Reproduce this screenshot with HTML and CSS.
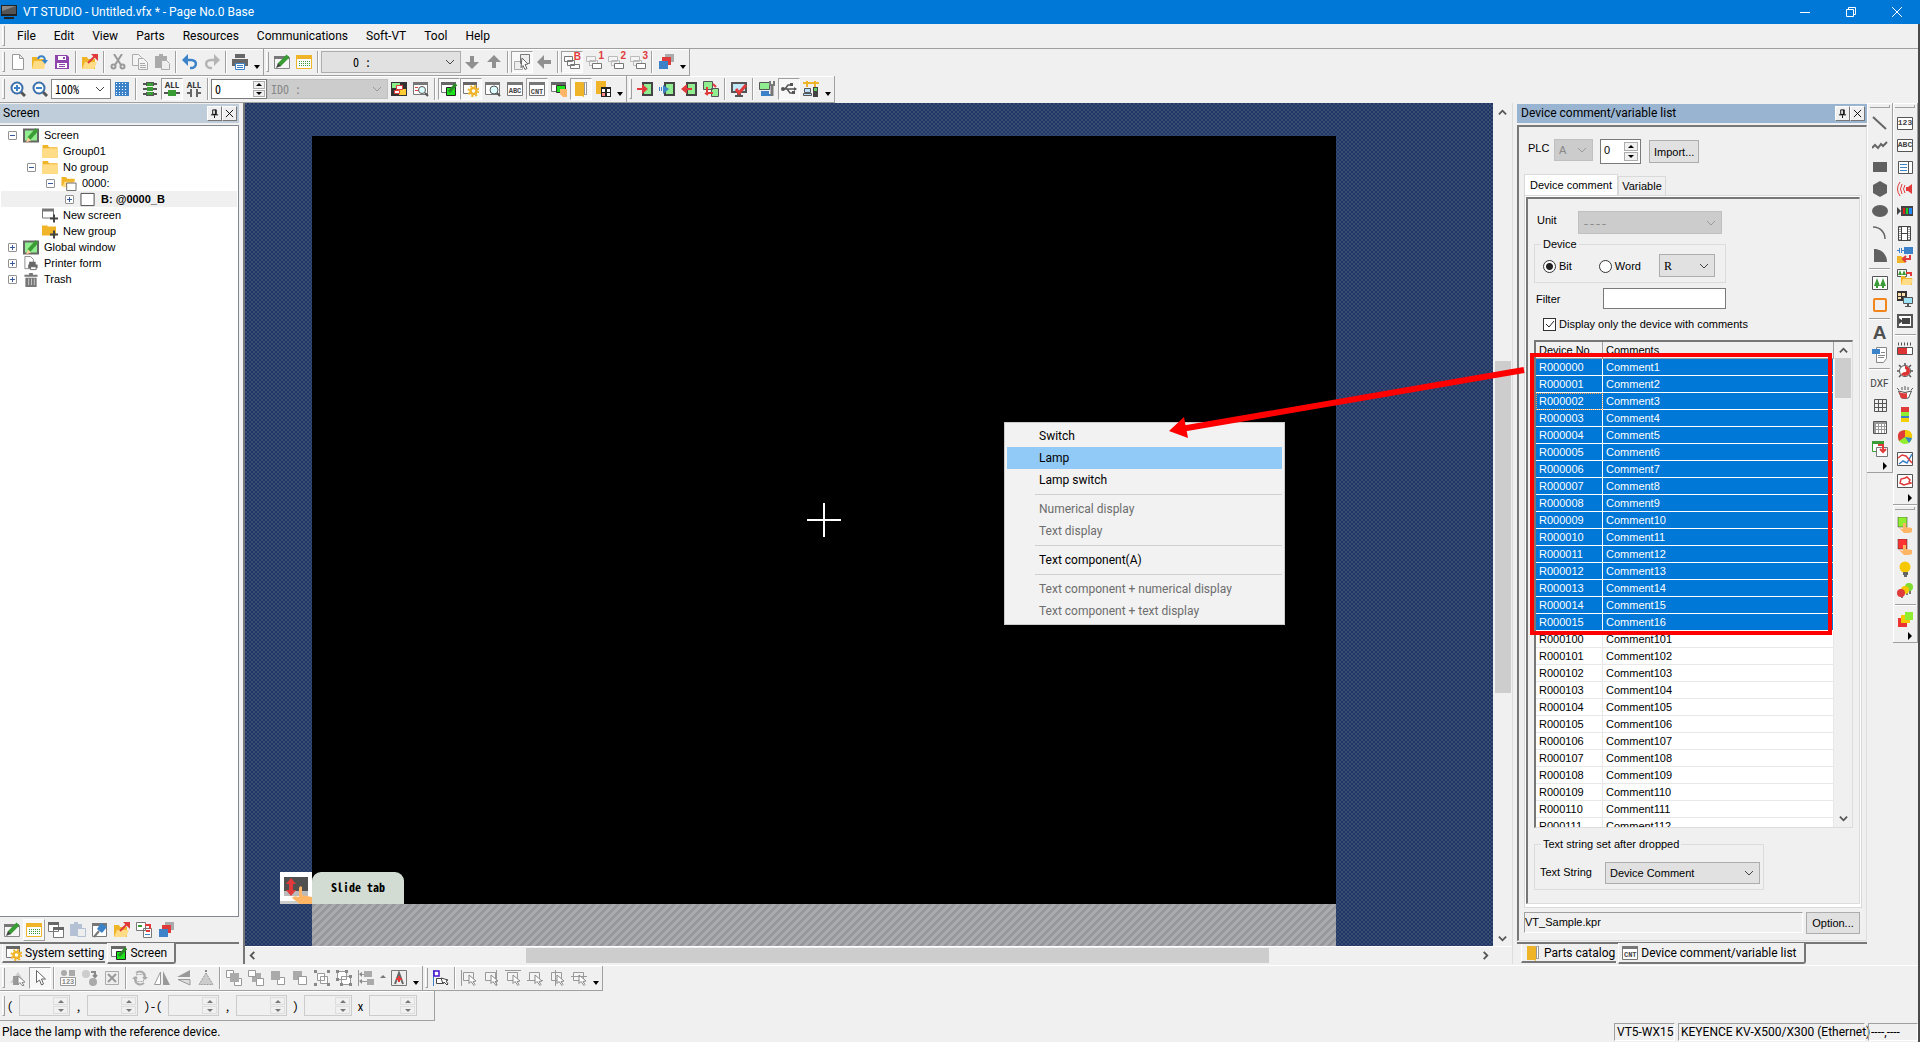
FILE: index.html
```html
<!DOCTYPE html>
<html lang="en">
<head>
<meta charset="utf-8">
<title>VT STUDIO - Untitled.vfx * - Page No.0 Base</title>
<link rel="stylesheet" href="styles.css">
</head>
<body>
<svg class="defs" aria-hidden="true">
  <symbol id="app" viewBox="0 0 16 16"><path fill="#222" d="M0 1h16v11H0zM3 13h10v2H3z"/><path fill="#555" d="M1 2h14v8H1z"/><path fill="#888" d="M1 2h14L1 7z"/></symbol>
  <symbol id="new" viewBox="0 0 16 16"><path fill="#fff" stroke="#999" d="M2.500.5h7l4 4v11h-11zM9.500.5v4h4"/></symbol>
  <symbol id="open" viewBox="0 0 16 16"><path fill="#f0b429" d="M0 3h5l1 2h6v10H0z"/><path fill="#ffdc85" d="M2 7h12l-2 8H0z"/><path fill="none" stroke="#3b82c8" stroke-width="2" d="M6 5c1-4 7-4 7 2"/><path fill="#3b82c8" d="M9.500 6H16l-3 4z"/></symbol>
  <symbol id="save" viewBox="0 0 16 16"><path fill="#8e44ad" d="M1 1h12l2 2v12H1z"/><path fill="#fff" d="M4 2h8v4H4zM3 9h10v5H3z"/><path fill="#8e44ad" d="M9 3h2v2H9zM5 10h6v1H5zM5 12h6v1H5z"/></symbol>
  <symbol id="export" viewBox="0 0 16 16"><path fill="#f0b429" d="M0 3h5l1 2h7v10H0z"/><path fill="#ffdc85" d="M3 8h12l-3 7H0z"/><path fill="none" stroke="#e03a3a" stroke-width="2" d="m6 9 7-7"/><path fill="#e03a3a" d="M9 0h7v7z"/></symbol>
  <symbol id="cut" viewBox="0 0 16 16"><g fill="none" stroke="#999" stroke-width="2"><path d="m4 0 7 11M12 0 5 11"/><circle cx="3.500" cy="12.500" r="2"/><circle cx="12.500" cy="12.500" r="2"/></g></symbol>
  <symbol id="copy" viewBox="0 0 16 16"><g fill="#f4f4f4" stroke="#aaa"><path d="M.5.500h6l3 3v8h-9z"/><path d="M6.500 4.500h5l4 4v7h-9zM8 9.500h5M8 11.500h6M8 13.500h6"/></g></symbol>
  <symbol id="paste" viewBox="0 0 16 16"><path fill="#aaa" d="M1 2h4V0h4v2h4v12H1z"/><path fill="#eee" stroke="#aaa" d="M7.500 6.500h5l3 3v6h-8z"/></symbol>
  <symbol id="undo" viewBox="0 0 16 16"><path fill="none" stroke="#3b82c8" stroke-width="2.500" d="M3 6h6c7 0 6 8 0 8H8"/><path fill="#3b82c8" d="m0 6 6-6v12z"/></symbol>
  <symbol id="redo" viewBox="0 0 16 16"><path fill="none" stroke="#b4b4b4" stroke-width="2.500" d="M13 6H7c-7 0-6 8 0 8h1"/><path fill="#b4b4b4" d="m16 6-6-6v12z"/></symbol>
  <symbol id="print" viewBox="0 0 16 16"><path fill="#666" d="M3 0h10v4H3zM0 5h16v7H0z"/><path fill="#fff" stroke="#3b82c8" d="M3.500 9.500h9v6h-9z"/><path stroke="#3b82c8" d="M5 11.500h6M5 13.500h6"/></symbol>
  <symbol id="edit" viewBox="0 0 16 16"><path fill="#f6f6f6" stroke="#888" d="M.5 3.500h15v11H.5z"/><path fill="#777" d="M0 2h15v3H0z"/><path stroke="#3a9c35" stroke-width="4" d="m5 11 9-9"/><path fill="#444" d="m2 14 2-5 3 3z"/></symbol>
  <symbol id="keys" viewBox="0 0 16 16"><path fill="#fff" stroke="#f0b429" d="M.5 1.500h15v13H.5z"/><path fill="#f0b429" d="M0 1h16v4H0z"/><path stroke="#3a9c35" stroke-dasharray="1 1" d="M3 7.500h11M3 9.500h11M3 11.500h11"/></symbol>
  <symbol id="down" viewBox="0 0 16 16"><path fill="#909090" d="M6 2h4v6h5l-7 7-7-7h5z"/></symbol>
  <symbol id="up" viewBox="0 0 16 16"><path fill="#909090" d="M6 14h4V8h5L8 1 1 8h5z"/></symbol>
  <symbol id="left" viewBox="0 0 16 16"><path fill="#909090" d="M15 6v4H8v5L1 8l7-7v5z"/></symbol>
  <symbol id="pick" viewBox="0 0 16 16"><path fill="#eee" stroke="#aaa" d="M.5 7.500h8v8h-8z"/><path fill="#eee" stroke="#777" d="M6.500.5h9v9h-9z"/><path fill="#fff" stroke="#666" d="m8 4 6 6-3 .5 2 4-2 1-2-4-2 2z"/></symbol>
  <symbol id="lay" viewBox="0 0 16 16"><path fill="#fff" stroke="currentColor" d="M.5 2.500h8v5h-8zM3.500 6.500h7v5h-7zM6.500 10.500h9v4h-9z"/></symbol>
  <symbol id="layL" viewBox="0 0 16 16"><path fill="#f4f4f4" stroke="#bbb" d="M.5 2.500h9v5h-9zM3.500 6.500h8v5h-8z"/><path fill="#fff" stroke="#777" d="M6.500 9.500h9v5h-9z"/></symbol>
  <symbol id="stack" viewBox="0 0 16 16"><path fill="#aaa" d="M7 0h9v8H7z"/><path fill="#e03a3a" d="M4 3h9v8H4z"/><path fill="#3b82c8" d="M1 7h9v8H1z"/></symbol>
  <symbol id="zin" viewBox="0 0 16 16"><path stroke="#555" stroke-width="3" d="m11 11 4 4"/><circle cx="7" cy="7" r="5.500" fill="#fff" stroke="#3b6fa8" stroke-width="2"/><path stroke="#3b82c8" stroke-width="2" d="M4 7h6M7 4v6"/></symbol>
  <symbol id="zout" viewBox="0 0 16 16"><path stroke="#555" stroke-width="3" d="m11 11 4 4"/><circle cx="7" cy="7" r="5.500" fill="#fff" stroke="#3b6fa8" stroke-width="2"/><path stroke="#3b82c8" stroke-width="2" d="M4 7h6"/></symbol>
  <symbol id="grid" viewBox="0 0 16 16"><path fill="#3b82c8" d="M1 1h14v14H1z"/><path stroke="#fff" stroke-dasharray="1 2" d="M2 2.500h12M2 5.500h12M2 8.500h12M2 11.500h12M2 13.500h12"/></symbol>
  <symbol id="ladder" viewBox="0 0 16 16"><path stroke="#555" stroke-width="2" d="M1 3h14M1 8h14M1 13h14"/><path fill="#555" d="M4 1h8v4H4zM4 11h8v4H4z"/><path fill="#3a9c35" d="M5 2h6v3H5zM5 6h6v4H5zM5 11h6v3H5z"/></symbol>
  <symbol id="contact" viewBox="0 0 16 8"><path stroke="#555" stroke-width="2" d="M0 4h16"/><path fill="#3a9c35" d="M4 1h8v6H4z"/></symbol>
  <symbol id="contact0" viewBox="0 0 16 8"><path fill="none" stroke="#666" stroke-width="2" d="M1 4h4M5 0v8M11 0v8M11 4h4"/></symbol>
  <symbol id="colors" viewBox="0 0 16 16"><path fill="#333" d="M0 1h16v14H0z"/><path fill="#8e8" d="M1 2h8v5H1z"/><path fill="#fc3" d="M8 8h7v6H8z"/><path fill="#fff" stroke="#e03a3a" d="M5.500 4.500h6v4h-6zM3.500 9.500h5v3h-5z"/></symbol>
  <symbol id="winfind" viewBox="0 0 16 16"><path fill="#fff" stroke="#777" d="M.5 1.500h14v12H.5z"/><path fill="#777" d="M0 1h15v3H0z"/><path stroke="#e03a3a" d="M2 6.500h3M2 9.500h3"/><circle cx="9" cy="9" r="3.500" fill="#dff" stroke="#555"/><path stroke="#555" stroke-width="2" d="m12 12 3 3"/></symbol>
  <symbol id="find" viewBox="0 0 16 16"><path fill="#fff" stroke="#777" d="M.5 1.500h14v12H.5z"/><path fill="#777" d="M0 1h15v3H0z"/><circle cx="9" cy="9" r="4" fill="#dff" stroke="#555"/><path stroke="#555" stroke-width="2" d="m12 12 3 3"/></symbol>
  <symbol id="scr" viewBox="0 0 16 16"><path fill="#fff" stroke="#777" d="M.5 1.500h14v10H.5z"/><path fill="#666" d="M0 1h15v3H0z"/><path fill="#1de31d" stroke="#222" d="M5.500 6.500h9v8h-9z"/><path fill="none" stroke="#2a8a26" stroke-width="3" d="m8 11 7-8"/></symbol>
  <symbol id="gearwin" viewBox="0 0 16 16"><path fill="#fff" stroke="#777" d="M.5 1.500h13v11H.5z"/><path fill="#666" d="M0 1h14v3H0z"/><circle cx="10.500" cy="10" r="5" fill="none" stroke="#f0b429" stroke-width="2" stroke-dasharray="2 1.930"/><circle cx="10.500" cy="10" r="3" fill="#fff" stroke="#f0b429" stroke-width="2.500"/></symbol>
  <symbol id="win" viewBox="0 0 16 16"><path fill="#fff" stroke="#777" d="M.5 1.500h15v13H.5z"/><path fill="#777" d="M0 1h16v3H0z"/></symbol>
  <symbol id="book" viewBox="0 0 16 16"><path fill="#fff" stroke="#aaa" d="M9.500 1.500h4v12h-4z"/><path fill="#f0b429" d="M2 1h7l2 1v14l-2-1H2z"/><path fill="none" stroke="#999" d="M11.500 2v12M13.500 1v13"/></symbol>
  <symbol id="bookg" viewBox="0 0 16 16"><path fill="#f0b429" d="M1 0h10v13H1z"/><path fill="#222" d="M6 6h10v10H6z"/><path fill="#fff" d="M7 8h3v3H7zM12 8h3v3h-3zM12 12h3v3h-3z"/><path fill="#f88" d="M7 12h3v3H7z"/></symbol>
  <symbol id="scrhand" viewBox="0 0 16 16"><path fill="#fff" stroke="#777" d="M.5 1.500h14v9H.5z"/><path fill="#666" d="M0 1h15v3H0z"/><path fill="#1de31d" stroke="#333" d="M5.500 4.500h9v7h-9z"/><path fill="#ffb566" d="M9 8h7v8h-4l-3-3z"/></symbol>
  <symbol id="tin" viewBox="0 0 16 16"><path fill="#90ee90" stroke="#444" stroke-width="2" d="M6 2h9v12H6z"/><path fill="#e03a3a" d="M0 7h5V3l6 5-6 5V9H0z"/></symbol>
  <symbol id="tmon" viewBox="0 0 16 16"><path fill="#90ee90" stroke="#444" stroke-width="2" d="M6 2h9v12H6z"/><path fill="#3b82c8" d="M0 6h1v4H0zM2 6h1v4H2zM4 4l6 4-6 5z"/></symbol>
  <symbol id="tout" viewBox="0 0 16 16"><path fill="#90ee90" stroke="#444" stroke-width="2" d="M6 2h9v12H6z"/><path fill="#e03a3a" d="M11 7H6V3L0 8l6 5V9h5z"/></symbol>
  <symbol id="tcmp" viewBox="0 0 16 16"><path fill="#90ee90" stroke="#555" d="M.5.5h9v8h-9zM8.500 7.500h7v8h-7z"/><path fill="none" stroke="#e03a3a" stroke-width="2" d="M4 6v6h6M10 3l3 3M2 12l3 2"/></symbol>
  <symbol id="mon" viewBox="0 0 16 16"><path fill="#bfe8f8" stroke="#555" stroke-width="2" d="M1 2h14v9H1z"/><path fill="#555" d="M6 12h4v2H6zM4 14h8v2H4z"/><path fill="none" stroke="#e03a3a" stroke-width="3" d="m5 8 3 4 7-8"/></symbol>
  <symbol id="cfg" viewBox="0 0 16 16"><path fill="#90ee90" stroke="#555" d="M.5 1.500h10v7H.5z"/><path fill="#3b82c8" d="M2 10h8v3h4v2H2z"/><path stroke="#777" stroke-width="3" d="M13 4v11"/><path fill="none" stroke="#777" stroke-width="2" d="M11 0v4h4V0"/></symbol>
  <symbol id="usb" viewBox="0 0 16 16"><path fill="none" stroke="#555" stroke-width="1.500" d="M1 8h14M4 8l3-4h3M6 8l3 4h3"/><circle cx="2" cy="8" r="2" fill="#555"/><path fill="#555" d="M9 2h3v3H9zM11 10h3v3h-3zM13 6l3 2-3 2z"/></symbol>
  <symbol id="net" viewBox="0 0 16 16"><path stroke="#f0b429" stroke-width="2" d="M0 2h16M4 0v6M12 0v6"/><path fill="#bdf" stroke="#555" d="M1.500 7.500h6v4h-6zM.5 12.500h8v2h-8z"/><path fill="#444" d="M10 6h5v10h-5z"/><path fill="#6c6" d="M11 7h3v3h-3z"/></symbol>
  <symbol id="tscr" viewBox="0 0 16 14"><path fill="#90ee90" stroke="#666" stroke-width="2" d="M1 1h14v12H1z"/><path stroke="#3a9c35" stroke-width="4" d="m6 10 8-9"/><path fill="#fc9" d="m3 14 2-5 3 3z"/></symbol>
  <symbol id="fold" viewBox="0 0 14 14"><path fill="#f0b429" d="M0 1h5l1 2h8v10H0z"/><path fill="#ffdc85" d="M0 4h14v9H0z"/></symbol>
  <symbol id="foldo" viewBox="0 0 16 16"><path fill="#f0b429" d="M0 1h5l1 2h8v3L0 11z"/><path fill="#ffdc85" d="M3 6h10l-3 6H1z"/><path fill="#fff" stroke="#666" d="M5.500 7.500h10v8h-10z"/></symbol>
  <symbol id="page" viewBox="0 0 16 16"><path fill="#fff" stroke="#444" d="M.5 1.500h14v13H.5z"/></symbol>
  <symbol id="nscr" viewBox="0 0 16 14"><path fill="#fff" stroke="#777" d="M.5 1.500h11v8H.5z"/><path fill="#777" d="M0 0h12v3H0z"/><path stroke="#444" stroke-width="2" d="M8 10h8M12 6v8"/></symbol>
  <symbol id="nfold" viewBox="0 0 16 14"><path fill="#f0b429" d="M0 1h5l1 1h8v9H0z"/><path stroke="#444" stroke-width="2" d="M8 10h8M12 6v8"/></symbol>
  <symbol id="pform" viewBox="0 0 16 16"><path fill="#fff" stroke="#888" d="M1.500.5h6l3 3v10h-9z"/><path fill="#666" d="M6 6h7v3H6zM5 9h10v4H5z"/><path fill="#fff" stroke="#666" d="M7.500 11.500h6v3h-6z"/></symbol>
  <symbol id="trash" viewBox="0 0 16 16"><path fill="#777" d="M1 3h5V1h4v2h5v2H1zM2 6h12v10H2z"/><path stroke="#ccc" d="M5.500 7v7M8.500 7v7M11.500 7v7"/></symbol>
  <symbol id="wins" viewBox="0 0 16 16"><path fill="#fff" stroke="#777" d="M.5 1.500h10v8H.5zM5.500 6.500h10v9h-10z"/><path fill="#666" d="M0 0h11v3H0zM5 5h11v3H5z"/></symbol>
  <symbol id="pasteb" viewBox="0 0 16 16"><path fill="#b4c0d4" d="M0 2h4V0h4v2h4v12H0z"/><path fill="#eee" stroke="#b4c0d4" d="M7.500 6.500h8v8h-8z"/></symbol>
  <symbol id="pin2" viewBox="0 0 16 16"><path fill="#fff" stroke="#777" d="M.5 2.500h14v12H.5z"/><path fill="#777" d="M0 1h15v3H0z"/><path fill="#3b82c8" d="m9 1 6 4-5 6-5-4z"/><path stroke="#777" stroke-width="2" d="m7 9-5 6"/></symbol>
  <symbol id="trans" viewBox="0 0 16 16"><path fill="#fff" stroke="#777" d="M.5.5h9v8h-9zM7.500 6.500h8v9h-8z"/><path stroke="#3a9c35" stroke-width="2" d="M2 4h4"/><path fill="none" stroke="#e03a3a" stroke-width="2" d="M9 3h5v4M10 9h4"/><path stroke="#3b82c8" d="M9 12.500h5"/></symbol>
  <symbol id="g1" viewBox="0 0 16 16"><path fill="#ccc" d="m0 13 8-11 6 9z"/><path fill="#999" d="M3 6h6v9H3z"/><path fill="#fff" stroke="#888" d="m8 6 7 6-3 .5 2 3h-2l-2-3-2 2z"/></symbol>
  <symbol id="cursor" viewBox="0 0 16 16"><path fill="#fff" stroke="#666" d="M4.500.5v12l3-2.500 2 5 2-1-2-5h4z"/></symbol>
  <symbol id="g123" viewBox="0 0 16 16"><circle cx="4" cy="3" r="3" fill="#aaa"/><path fill="#aaa" d="M9 0h6v6H9z"/><path fill="#fff" stroke="#999" d="M.5 7.500h15v8H.5z"/></symbol>
  <symbol id="gconv" viewBox="0 0 16 16"><circle cx="4" cy="4" r="4" fill="#ccc"/><circle cx="11" cy="12" r="4" fill="#aaa"/><path fill="none" stroke="#888" stroke-width="2" d="M9 2h4v5M11 5l2 2 2-2"/></symbol>
  <symbol id="gx" viewBox="0 0 16 16"><path fill="#eee" stroke="#aaa" d="M1.500 1.500h13v13h-13z"/><path stroke="#999" stroke-width="2" d="m4 4 8 8M12 4l-8 8"/></symbol>
  <symbol id="grot" viewBox="0 0 16 16"><path fill="none" stroke="#aaa" stroke-dasharray="2 1" d="M4.500 4.500h7v7h-7z"/><path fill="none" stroke="#aaa" stroke-width="2" d="M4 3c4-3 9-1 9 4M12 13c-4 3-9 1-9-4"/><path fill="#aaa" d="M10 7h6l-3 3zM0 9h6L3 6z"/></symbol>
  <symbol id="gfh" viewBox="0 0 16 16"><path fill="#fff" stroke="#999" d="M6.500 2v12.500H.5z"/><path fill="#999" d="M9 1v14h7z"/></symbol>
  <symbol id="gfv" viewBox="0 0 16 16"><path fill="#999" d="M14 0v7H1z"/><path fill="#ddd" stroke="#999" d="M14 15V9.500H2z"/></symbol>
  <symbol id="gtri" viewBox="0 0 16 16"><path fill="#ccc" stroke="#999" stroke-dasharray="2 1" d="M8 3 1 14.500h14z"/><path fill="#888" d="M7 0h2v2H7z"/></symbol>
  <symbol id="go1" viewBox="0 0 16 16"><path fill="#fff" stroke="#999" d="M.5.5h7v7h-7zM8.500 8.500h7v7h-7z"/><path fill="#aaa" d="M4 3h9v9H4z"/></symbol>
  <symbol id="go2" viewBox="0 0 16 16"><path fill="#aaa" d="M4 3h9v9H4z"/><path fill="#fff" stroke="#999" d="M.5.5h7v6h-7zM8.500 8.500h7v7h-7z"/></symbol>
  <symbol id="go3" viewBox="0 0 16 16"><path fill="#fff" stroke="#999" d="M7.500 7.500h7v7h-7z"/><path fill="#aaa" d="M1 1h9v9H1z"/></symbol>
  <symbol id="go4" viewBox="0 0 16 16"><path fill="#aaa" d="M1 1h9v9H1z"/><path fill="#fff" stroke="#999" d="M6.500 6.500h8v8h-8z"/></symbol>
  <symbol id="ggrp" viewBox="0 0 16 16"><path fill="#fff" stroke="#999" d="M3.500 3.500h7v7h-7zM6.500 6.500h7v7h-7z"/><path fill="#888" d="M0 0h3v3H0zM13 0h3v3h-3zM0 13h3v3H0zM13 13h3v3h-3z"/></symbol>
  <symbol id="gung" viewBox="0 0 16 16"><path fill="#fff" stroke="#999" d="M1.500 1.500h9v8h-9zM5.500 6.500h9v8h-9z"/><path fill="#888" d="M0 0h3v3H0zM9 0h3v3H9zM0 8h3v3H0zM4 13h3v3H4zM13 13h3v3h-3zM13 5h3v3h-3z"/></symbol>
  <symbol id="gal" viewBox="0 0 16 16"><path stroke="#999" d="M.5 0v16M2 4.500h4M2 11.500h7"/><path fill="#aaa" d="M6 1h8v6H6zM9 9h7v6H9z"/><path fill="#888" d="m1 4 3-2v5zM1 11l3-2v5z"/></symbol>
  <symbol id="abox" viewBox="0 0 16 16"><path fill="#eee" stroke="#777" d="M.5.5h15v15H.5z"/><path fill="none" stroke="#666" stroke-width="2" d="m4 14 4-11 4 11"/><path stroke="#e03a3a" stroke-width="2" d="M5 9h6M8 6v6"/></symbol>
  <symbol id="sel1" viewBox="0 0 16 16"><path stroke="#3b82c8" d="M.5 0v16"/><path fill="#fff" stroke="#41c" stroke-width="1.500" d="M1 1h5v5H1z"/><path fill="#fff" stroke="#444" d="M3.500 8.500h6v5h-6z"/><path fill="#fff" stroke="#444" d="m8 8 7 2-2 1 2 3-1 1-3-3-1 2z"/></symbol>
  <symbol id="gs" viewBox="0 0 16 16"><path fill="#f4f4f4" stroke="#999" d="M2.500 2.500h10v8h-10z"/><path fill="#fff" stroke="#888" d="m8 5 7 6-3 .5 2 3-1 1-3-4-2 2z"/></symbol>
  <symbol id="line" viewBox="0 0 16 16"><path stroke="#666" stroke-width="2" d="m1 2 13 12"/></symbol>
  <symbol id="zig" viewBox="0 0 16 16"><path fill="none" stroke="#666" stroke-width="2" d="m0 11 3-3 3 3 3-4 2 2 4-4"/></symbol>
  <symbol id="rect" viewBox="0 0 16 16"><path fill="#606060" d="M1 3h14v10H1z"/></symbol>
  <symbol id="hex" viewBox="0 0 16 16"><path fill="#606060" d="m8 0 7 4v8l-7 4-7-4V4z"/></symbol>
  <symbol id="ell" viewBox="0 0 16 16"><ellipse cx="8" cy="8" rx="8" ry="6" fill="#606060"/></symbol>
  <symbol id="arc" viewBox="0 0 16 16"><path fill="none" stroke="#666" stroke-width="1.500" d="M1 2c7 0 12 5 12 12"/></symbol>
  <symbol id="pie" viewBox="0 0 16 16"><path fill="#606060" d="M2 2c7 0 13 5 13 13H2z"/></symbol>
  <symbol id="pic" viewBox="0 0 16 16"><path fill="#fff" stroke="#555" d="M.5 1.500h15v13H.5z"/><path fill="#3a9c35" d="m5 3 3 8H2zM11 3l3 8H8zM4 11h2v2H4zM10 11h2v2h-2z"/></symbol>
  <symbol id="frame" viewBox="0 0 16 16"><rect x="2" y="2" width="12" height="12" rx="1" fill="none" stroke="#f0861c" stroke-width="2"/></symbol>
  <symbol id="doc" viewBox="0 0 16 16"><path fill="#fff" stroke="#888" d="M4.500.5h10v11l-3 4h-7z"/><path fill="#3b82c8" d="M0 2h8v5H0z"/><path stroke="#888" d="M9 5.500h4M6 8.500h7M6 10.500h6"/></symbol>
  <symbol id="tbl" viewBox="0 0 16 16"><path fill="none" stroke="#555" d="M2.500 2.500h12v12h-12zM6.500 2v12M10.500 2v12M2 6.500h12M2 10.500h12"/></symbol>
  <symbol id="tbl2" viewBox="0 0 16 16"><path fill="#fff" stroke="#555" d="M1.500 2.500h13v12h-13z"/><path fill="#999" d="M2 3h12v2H2zM2 5h2v9H2z"/><path stroke="#999" d="M6.500 5v9M9.500 5v9M12.500 5v9M4 7.500h10M4 10.500h10"/></symbol>
  <symbol id="jump" viewBox="0 0 16 16"><path fill="#fff" stroke="#3a9c35" d="M.5 1.500h11v9H.5z"/><path fill="#3a9c35" d="M0 0h12v3H0z"/><path fill="#fff" stroke="#777" d="M4.500 6.500h11v9h-11z"/><path fill="none" stroke="#e03a3a" stroke-width="2" d="M6 4h5v6M8 8l3 3 3-3"/></symbol>
  <symbol id="box" viewBox="0 0 16 16"><path fill="#fff" stroke="#555" d="M.5 2.500h15v12H.5z"/></symbol>
  <symbol id="list" viewBox="0 0 16 16"><path fill="#fff" stroke="#555" d="M1.500 2.500h14v12h-14zM11.500 3v11"/><path stroke="#3b82c8" d="M3 5.500h7M3 8.500h7M3 11.500h7"/></symbol>
  <symbol id="snd" viewBox="0 0 16 16"><path fill="#e03a3a" d="M9 6h2l4-3v10l-4-3H9z"/><path fill="none" stroke="#e03a3a" d="M8 4q-3 4 0 8M5 3Q2 8 5 13M3 1Q-2 8 3 15"/></symbol>
  <symbol id="cam" viewBox="0 0 16 16"><path fill="#444" d="M4 3h12v10H4zM0 4l4 4-4 4z"/><path fill="#d22" d="M6 5h2v6H6z"/><path fill="#2c2" d="M9 5h2v6H9z"/><path fill="#28f" d="M12 5h3v6h-3z"/></symbol>
  <symbol id="film" viewBox="0 0 16 16"><path fill="#fff" stroke="#444" d="M1.500 1.500h12v14h-12zM4.500 1v14M10.500 1v14M4 8.500h7"/><path stroke="#444" stroke-dasharray="1 1" d="M3 2v13M12 2v13"/></symbol>
  <symbol id="rcp" viewBox="0 0 16 16"><path fill="#3b82c8" d="M7 0h9v7H7zM0 3h2v1H0zM2 1h1v5H2zM4 1h1v5H4zM5 3h2v1H5z"/><path fill="#f0b429" d="M0 9h4l1 1h3v6H0z"/><path fill="none" stroke="#e03a3a" stroke-width="2" d="M13 8v4H7M9 9l-3 3 3 3"/></symbol>
  <symbol id="picf" viewBox="0 0 16 16"><path fill="#fff" stroke="#555" d="M.5.5h9v7h-9z"/><path fill="#3a9c35" d="m3 1 2 5H1zM7 1l2 5H5z"/><path fill="#f0b429" d="M4 7h4l1 2h6v7H4z"/><path fill="#ffdc85" d="M6 10h10l-2 6H4z"/><path fill="none" stroke="#e03a3a" stroke-width="2" d="M9 4h5v3"/></symbol>
  <symbol id="rem" viewBox="0 0 16 16"><path fill="#333" d="M0 0h10v10H0z"/><path fill="#fda" d="M1 2h3v3H1zM5 2h3v3H5zM1 6h3v2H1z"/><path fill="#9de3f5" stroke="#555" d="M6.500 6.500h9v6h-9z"/><path fill="#555" d="M10 13h2v2h2v1H8v-1h2z"/></symbol>
  <symbol id="vid" viewBox="0 0 16 16"><path fill="#fff" stroke="#555" stroke-width="2" d="M1 2h14v12H1z"/><path fill="#444" d="M5 5h8v6H5zM2 5l4 3-4 3z"/></symbol>
  <symbol id="bar" viewBox="0 0 16 16"><path fill="#fff" stroke="#555" d="M.5 6.500h15v7H.5z"/><path fill="#d33" d="M1 7h9v6H1z"/><path stroke="#555" stroke-dasharray="1 2" stroke-width="3" d="M1 3h15"/></symbol>
  <symbol id="dial" viewBox="0 0 16 16"><path stroke="#555" stroke-width="1.500" d="M8 0v2M2 2l2 2M14 2l-2 2M0 8h2M14 8h2M2 14l2-2M14 14l-2-2"/><circle cx="8" cy="8" r="5.500" fill="#fff" stroke="#555"/><path fill="#d33" d="M8 3a5 5 0 0 1 0 10c-2 0-3-1-4-2l3-2c3 1 3-3 1-3z"/></symbol>
  <symbol id="fan" viewBox="0 0 16 16"><path fill="#fff" stroke="#555" d="M1.500 6q6.500 3 13 0l-3 7q-3 1-7 0z"/><path fill="#e03a3a" d="M2 7q4 2 8 1v5q-3 1-6 0z"/><path stroke="#555" d="m0 3 2 2M5 2v3M8 1v4M11 2v3M16 3l-2 2"/></symbol>
  <symbol id="seg" viewBox="0 0 16 16"><path fill="#e03a3a" d="M4 0h8v6H4z"/><path fill="#90ee30" d="M4 5h8v5H4z"/><path fill="#3b82c8" d="M4 9h8v3H4z"/><path fill="#f5d000" d="M4 11h8v4H4z"/></symbol>
  <symbol id="pch" viewBox="0 0 16 16"><circle cx="8" cy="8" r="7" fill="#90ee30"/><path fill="#f5c800" d="M8 8V1q8 0 7 8z"/><path fill="#3b82c8" d="m8 8 7 1q-1 3-3 5z"/><path fill="#e03a3a" d="M8 8V1Q-2 2 2 12z"/></symbol>
  <symbol id="gr1" viewBox="0 0 16 16"><path fill="#fff" stroke="#555" d="M.5 1.500h15v13H.5z"/><path fill="none" stroke="#3b82c8" stroke-width="1.500" d="m2 13 4-3 4 2 5-9"/><path fill="none" stroke="#e03a3a" stroke-width="1.500" d="m1 7 4-3 4 1 6 7"/></symbol>
  <symbol id="gr2" viewBox="0 0 16 16"><path fill="#fff" stroke="#555" d="M.5 1.500h15v13H.5z"/><path fill="none" stroke="#e03a3a" stroke-width="1.500" d="m7 12-4-2 1-4 4-1 2-1 3 3-1 2 2 1-4 1z"/></symbol>
  <symbol id="sw" viewBox="0 0 16 16"><path fill="currentColor" stroke="#333" stroke-width=".5" d="M1 0h9v10H1z"/><path fill="#ffb566" d="M6 6h3v4l6 1v4l-3 1H7l-5-5 4 1z"/></symbol>
  <symbol id="bulb" viewBox="0 0 16 16"><circle cx="8" cy="6" r="5.500" fill="#f5c800"/><path fill="#666" d="M6 11h5v3H7v2h3v-2H6z"/></symbol>
  <symbol id="bulbs" viewBox="0 0 16 16"><path stroke="#777" stroke-width="2" d="M5 11v4M10 8v4M13 6v5"/><circle cx="12" cy="4" r="4" fill="#80dd30"/><circle cx="8" cy="7" r="4" fill="#f5c800"/><circle cx="4" cy="10" r="4" fill="#e03a3a"/></symbol>
  <symbol id="sq3" viewBox="0 0 16 16"><path fill="#e33" d="M1 7h9v9H1z"/><path fill="#f5c800" d="M4 4h9v8H4z"/><path fill="#90ee30" d="M8 1h8v8H8z"/></symbol>
  <symbol id="slideic" viewBox="0 0 32 32"><path fill="#fff" d="M0 0h32v32H0z"/><path fill="#ccc" d="M0 29h32v3H0z"/><path fill="#505050" d="M4 5h24v14H4z"/><path fill="#bbb" d="M4 19h24v5H4z"/><path fill="#e03a3a" d="m11 6 5 6h-3v6h3l-5 6-5-6h3v-6H6z"/><path fill="#ffb566" d="M19 16q1-3 3-1v8l10 2v7H20l-8-6q1-3 7-1z"/></symbol>
</svg>

<header class="title">
  <svg class="app"><use href="#app"/></svg><h1>VT STUDIO - Untitled.vfx * - Page No.0 Base</h1>
  <button aria-label="Minimize"><svg viewBox="0 0 10 10"><path d="M0 5.500h10"/></svg></button>
  <button aria-label="Restore"><svg viewBox="0 0 10 10"><path d="M.5 2.500h7v7h-7zM2.500 2V.5h7v7H8"/></svg></button>
  <button aria-label="Close"><svg viewBox="0 0 10 10"><path d="m0 0 10 10M10 0 0 10"/></svg></button>
</header>
<div class="frame">
<nav class="menu"><i class="grip"></i><a href="#">File</a><a href="#">Edit</a><a href="#">View</a><a href="#">Parts</a><a href="#">Resources</a><a href="#">Communications</a><a href="#">Soft-VT</a><a href="#">Tool</a><a href="#">Help</a></nav>

<div class="row">
  <div class="bar"><i class="grip"></i>
    <button class="b" aria-label="New"><svg><use href="#new"/></svg></button><button class="b" aria-label="Open"><svg><use href="#open"/></svg></button><button class="b" aria-label="Save"><svg><use href="#save"/></svg></button><i class="sep"></i>
    <button class="b" aria-label="Export"><svg><use href="#export"/></svg></button><i class="sep"></i>
    <button class="b" aria-label="Cut"><svg><use href="#cut"/></svg></button><button class="b" aria-label="Copy"><svg><use href="#copy"/></svg></button><button class="b" aria-label="Paste"><svg><use href="#paste"/></svg></button><i class="sep"></i>
    <button class="b" aria-label="Undo"><svg><use href="#undo"/></svg></button><button class="b" aria-label="Redo"><svg><use href="#redo"/></svg></button><i class="sep"></i>
    <button class="b" aria-label="Print"><svg><use href="#print"/></svg></button><button class="more" aria-label="More"></button>
  </div>
  <div class="bar"><i class="grip"></i>
    <button class="b" aria-label="Edit page"><svg><use href="#edit"/></svg></button><button class="b" aria-label="Page list"><svg><use href="#keys"/></svg></button><i class="sep"></i>
    <select class="sel pagesel mono" aria-label="Page"><option>0 :</option></select>
    <button class="b" aria-label="Next"><svg><use href="#down"/></svg></button><button class="b" aria-label="Previous"><svg><use href="#up"/></svg></button><i class="sep"></i>
    <button class="b on" aria-label="Pick"><svg><use href="#pick"/></svg></button><button class="b" aria-label="Back"><svg><use href="#left"/></svg></button><i class="sep"></i>
    <button class="b on num" aria-label="Layer B"><svg><use href="#lay"/></svg><b>B</b></button><button class="b num" aria-label="Layer 1"><svg><use href="#layL"/></svg><b>1</b></button><button class="b num" aria-label="Layer 2"><svg><use href="#layL"/></svg><b>2</b></button><button class="b num" aria-label="Layer 3"><svg><use href="#layL"/></svg><b>3</b></button><i class="sep"></i>
    <button class="b" aria-label="Layers"><svg><use href="#stack"/></svg></button><button class="more" aria-label="More"></button>
  </div>
</div>
<div class="row">
  <div class="bar"><i class="grip"></i>
    <button class="b" aria-label="Zoom in"><svg><use href="#zin"/></svg></button><button class="b" aria-label="Zoom out"><svg><use href="#zout"/></svg></button>
    <select class="sel white zoomsel mono" aria-label="Zoom"><option>100%</option></select>
    <button class="b" aria-label="Grid"><svg><use href="#grid"/></svg></button><i class="sep"></i>
    <button class="b" aria-label="Devices"><svg><use href="#ladder"/></svg></button><button class="b on all"><b>ALL</b><svg><use href="#contact"/></svg></button><button class="b all"><b>ALL</b><svg><use href="#contact0"/></svg></button><i class="sep"></i>
    <span class="spin idspin"><input class="mono" value="0" aria-label="ID"><span><button aria-label="Up"></button><button class="dn" aria-label="Down"></button></span></span>
    <select class="sel dis idsel mono" aria-label="ID name" disabled><option>ID0 :</option></select>
    <button class="b" aria-label="Colors"><svg><use href="#colors"/></svg></button><button class="b" aria-label="Find device"><svg><use href="#winfind"/></svg></button><i class="sep"></i>
    <button class="b on" aria-label="Screen list"><svg><use href="#scr"/></svg></button><button class="b on" aria-label="System"><svg><use href="#gearwin"/></svg></button><button class="b" aria-label="Find"><svg><use href="#find"/></svg></button><button class="b tag"><svg><use href="#win"/></svg><b>ABC</b></button><button class="b on tag"><svg><use href="#win"/></svg><b>CNT</b></button><button class="b" aria-label="Touch"><svg><use href="#scrhand"/></svg></button><button class="b on" aria-label="Catalog"><svg><use href="#book"/></svg></button><button class="b" aria-label="Library"><svg><use href="#bookg"/></svg></button><button class="more" aria-label="More"></button>
  </div>
  <div class="bar"><i class="grip"></i>
    <button class="b" aria-label="Send"><svg><use href="#tin"/></svg></button><button class="b" aria-label="Monitor"><svg><use href="#tmon"/></svg></button><button class="b" aria-label="Receive"><svg><use href="#tout"/></svg></button><button class="b" aria-label="Compare"><svg><use href="#tcmp"/></svg></button><i class="sep"></i>
    <button class="b" aria-label="Verify"><svg><use href="#mon"/></svg></button><i class="sep"></i>
    <button class="b" aria-label="Settings"><svg><use href="#cfg"/></svg></button><button class="b on" aria-label="USB"><svg><use href="#usb"/></svg></button><button class="b" aria-label="Network"><svg><use href="#net"/></svg></button><button class="more" aria-label="More"></button>
  </div>
</div>

<main class="main">
  <aside class="left">
    <h2 class="head">Screen<button aria-label="Pin"><svg viewBox="0 0 10 10"><path d="M3 1h4v5H3zM6 1v5M1 6.500h8M5 7v3"/></svg></button><button aria-label="Close"><svg viewBox="0 0 10 10"><path d="m1 1 8 8M9 1 1 9"/></svg></button></h2>
    <ul class="tree">
      <li class="d0"><i class="ex m"></i><svg><use href="#tscr"/></svg>Screen</li>
      <li class="d1"><i class="ex none"></i><svg><use href="#fold"/></svg>Group01</li>
      <li class="d1"><i class="ex m"></i><svg><use href="#fold"/></svg>No group</li>
      <li class="d2"><i class="ex m"></i><svg><use href="#foldo"/></svg>0000:</li>
      <li class="d3 cur"><i class="ex"></i><svg><use href="#page"/></svg>B: @0000_B</li>
      <li class="d1"><i class="ex none"></i><svg><use href="#nscr"/></svg>New screen</li>
      <li class="d1"><i class="ex none"></i><svg><use href="#nfold"/></svg>New group</li>
      <li class="d0"><i class="ex"></i><svg><use href="#tscr"/></svg>Global window</li>
      <li class="d0"><i class="ex"></i><svg><use href="#pform"/></svg>Printer form</li>
      <li class="d0"><i class="ex"></i><svg><use href="#trash"/></svg>Trash</li>
    </ul>
    <div class="treebar"><button class="b" aria-label="Edit"><svg><use href="#edit"/></svg></button><button class="b up" aria-label="List"><svg><use href="#keys"/></svg></button><button class="b" aria-label="Copy"><svg><use href="#wins"/></svg></button><button class="b" aria-label="Paste"><svg><use href="#pasteb"/></svg></button><button class="b" aria-label="Properties"><svg><use href="#pin2"/></svg></button><button class="b" aria-label="Export"><svg><use href="#export"/></svg></button><button class="b" aria-label="Transfer"><svg><use href="#trans"/></svg></button><button class="b" aria-label="Layers"><svg><use href="#stack"/></svg></button></div>
    <div class="tabs"><button class="tab"><svg><use href="#gearwin"/></svg>System setting</button><button class="tab act"><svg><use href="#scr"/></svg>Screen</button></div>
  </aside>

  <section class="work">
    <div class="canvas">
      <div class="panelscr">
        <svg class="cross" viewBox="0 0 34 34"><path d="M17 0v34M0 17h34"/></svg>
        <div class="slide"><svg><use href="#slideic"/></svg><span class="mono">Slide tab</span></div>
      </div>
      <div class="stripe"></div>
    </div>
    <div class="vs"><svg viewBox="0 0 10 10"><path d="m1 7 4-4 4 4"/></svg><div class="track"><i></i></div><svg viewBox="0 0 10 10"><path d="m1 3 4 4 4-4"/></svg></div>
    <div class="hs"><svg viewBox="0 0 10 10"><path d="M7 1 3 5l4 4"/></svg><div class="track"><i></i></div><svg viewBox="0 0 10 10"><path d="m3 1 4 4-4 4"/></svg></div>
  </section>

  <aside class="right">
    <h2 class="head">Device comment/variable list<button aria-label="Pin"><svg viewBox="0 0 10 10"><path d="M3 1h4v5H3zM6 1v5M1 6.500h8M5 7v3"/></svg></button><button aria-label="Close"><svg viewBox="0 0 10 10"><path d="m1 1 8 8M9 1 1 9"/></svg></button></h2>
    <div class="rbox">
      <div class="plc"><label for="plc">PLC</label><select id="plc" class="sel dis" disabled><option>A</option></select><span class="spin plcspin"><input value="0" aria-label="PLC number"><span><button aria-label="Up"></button><button class="dn" aria-label="Down"></button></span></span><button class="push">Import...</button></div>
      <div class="ptabs"><button class="act">Device comment</button><button>Variable</button></div>
      <div class="page"><div class="inner">
        <div class="unit"><label for="unit">Unit</label><select id="unit" class="sel dis mono" disabled><option>----</option></select></div>
        <fieldset class="dev"><legend>Device</legend><label><input type="radio" name="d" checked>Bit</label><label class="word"><input type="radio" name="d">Word</label><select class="sel serif" aria-label="Device type"><option>R</option></select></fieldset>
        <div class="filter"><label for="flt">Filter</label><input id="flt" type="text"></div>
        <label class="only"><input type="checkbox" checked>Display only the device with comments</label>
        <div class="gridwrap">
          <div class="clip">
          <table>
            <thead><tr><th>Device No.</th><th>Comments</th></tr></thead>
            <tbody>
            <tr class="s"><td>R000000</td><td>Comment1</td></tr><tr class="s"><td>R000001</td><td>Comment2</td></tr><tr class="s"><td class="foc">R000002</td><td>Comment3</td></tr><tr class="s"><td>R000003</td><td>Comment4</td></tr><tr class="s"><td>R000004</td><td>Comment5</td></tr><tr class="s"><td>R000005</td><td>Comment6</td></tr><tr class="s"><td>R000006</td><td>Comment7</td></tr><tr class="s"><td>R000007</td><td>Comment8</td></tr><tr class="s"><td>R000008</td><td>Comment9</td></tr><tr class="s"><td>R000009</td><td>Comment10</td></tr><tr class="s"><td>R000010</td><td>Comment11</td></tr><tr class="s"><td>R000011</td><td>Comment12</td></tr><tr class="s"><td>R000012</td><td>Comment13</td></tr><tr class="s"><td>R000013</td><td>Comment14</td></tr><tr class="s"><td>R000014</td><td>Comment15</td></tr><tr class="s"><td>R000015</td><td>Comment16</td></tr>
            <tr><td>R000100</td><td>Comment101</td></tr><tr><td>R000101</td><td>Comment102</td></tr><tr><td>R000102</td><td>Comment103</td></tr><tr><td>R000103</td><td>Comment104</td></tr><tr><td>R000104</td><td>Comment105</td></tr><tr><td>R000105</td><td>Comment106</td></tr><tr><td>R000106</td><td>Comment107</td></tr><tr><td>R000107</td><td>Comment108</td></tr><tr><td>R000108</td><td>Comment109</td></tr><tr><td>R000109</td><td>Comment110</td></tr><tr><td>R000110</td><td>Comment111</td></tr><tr><td>R000111</td><td>Comment112</td></tr>
            </tbody>
          </table>
          </div>
          <div class="vs"><svg viewBox="0 0 10 10"><path d="m1 7 4-4 4 4"/></svg><div class="track"><i></i></div><svg viewBox="0 0 10 10"><path d="m1 3 4 4 4-4"/></svg></div>
          <div class="redbox"></div>
        </div>
        <fieldset class="drop"><legend>Text string set after dropped</legend><label for="ts">Text String</label><select id="ts" class="sel"><option>Device Comment</option></select></fieldset>
      </div></div>
      <div class="file"><output>VT_Sample.kpr</output><button class="push">Option...</button></div>
    </div>
    <div class="tabs"><button class="tab"><svg><use href="#book"/></svg>Parts catalog</button><button class="tab act tagged"><span class="b tag"><svg><use href="#win"/></svg><b>CNT</b></span>Device comment/variable list</button></div>
  </aside>

  <div class="col">
    <div class="vbar"><i class="grip"></i><button class="b" aria-label="Line"><svg><use href="#line"/></svg></button><button class="b" aria-label="Polyline"><svg><use href="#zig"/></svg></button><button class="b" aria-label="Rectangle"><svg><use href="#rect"/></svg></button><button class="b" aria-label="Polygon"><svg><use href="#hex"/></svg></button><button class="b" aria-label="Ellipse"><svg><use href="#ell"/></svg></button><button class="b" aria-label="Arc"><svg><use href="#arc"/></svg></button><button class="b" aria-label="Sector"><svg><use href="#pie"/></svg></button><i class="sep"></i><button class="b" aria-label="Image"><svg><use href="#pic"/></svg></button><button class="b" aria-label="Frame"><svg><use href="#frame"/></svg></button><i class="sep"></i><button class="b bigA">A</button><button class="b" aria-label="Document"><svg><use href="#doc"/></svg></button><i class="sep"></i><button class="b dxf">DXF</button><button class="b" aria-label="Table"><svg><use href="#tbl"/></svg></button><button class="b" aria-label="Data table"><svg><use href="#tbl2"/></svg></button><button class="b" aria-label="Window"><svg><use href="#jump"/></svg></button><button class="vmore" aria-label="More"></button></div>
  </div>
  <div class="col">
    <div class="vbar"><i class="grip"></i><button class="b tag2"><svg><use href="#box"/></svg><b>123</b></button><button class="b tag2"><svg><use href="#box"/></svg><b>ABC</b></button><button class="b" aria-label="List"><svg><use href="#list"/></svg></button><button class="b" aria-label="Sound"><svg><use href="#snd"/></svg></button><button class="b" aria-label="Camera"><svg><use href="#cam"/></svg></button><button class="b" aria-label="Film"><svg><use href="#film"/></svg></button><button class="b" aria-label="Recipe"><svg><use href="#rcp"/></svg></button><button class="b" aria-label="Pictures"><svg><use href="#picf"/></svg></button><button class="b" aria-label="Remote"><svg><use href="#rem"/></svg></button><button class="b" aria-label="Video"><svg><use href="#vid"/></svg></button><i class="sep"></i><button class="b" aria-label="Bar meter"><svg><use href="#bar"/></svg></button><button class="b" aria-label="Dial meter"><svg><use href="#dial"/></svg></button><button class="b" aria-label="Fan meter"><svg><use href="#fan"/></svg></button><button class="b" aria-label="Band graph"><svg><use href="#seg"/></svg></button><button class="b" aria-label="Pie graph"><svg><use href="#pch"/></svg></button><button class="b" aria-label="Trend graph"><svg><use href="#gr1"/></svg></button><button class="b" aria-label="XY graph"><svg><use href="#gr2"/></svg></button><button class="vmore" aria-label="More"></button></div>
    <div class="vbar"><i class="grip"></i><button class="b green" aria-label="Switch"><svg><use href="#sw"/></svg></button><button class="b red" aria-label="Red switch"><svg><use href="#sw"/></svg></button><button class="b" aria-label="Lamp"><svg><use href="#bulb"/></svg></button><button class="b" aria-label="Lamps"><svg><use href="#bulbs"/></svg></button><i class="sep"></i><button class="b" aria-label="Parts"><svg><use href="#sq3"/></svg></button><button class="vmore" aria-label="More"></button></div>
  </div>
</main>

<div class="row low">
  <div class="bar"><i class="grip"></i>
    <button class="b" aria-label="Select group"><svg><use href="#g1"/></svg></button><button class="b on" aria-label="Select"><svg><use href="#cursor"/></svg></button><i class="sep"></i>
    <button class="b n123"><svg><use href="#g123"/></svg><b>123</b></button><button class="b" aria-label="Convert"><svg><use href="#gconv"/></svg></button><button class="b" aria-label="Delete"><svg><use href="#gx"/></svg></button><i class="sep"></i>
    <button class="b" aria-label="Rotate"><svg><use href="#grot"/></svg></button><button class="b" aria-label="Flip horizontal"><svg><use href="#gfh"/></svg></button><button class="b" aria-label="Flip vertical"><svg><use href="#gfv"/></svg></button><button class="b" aria-label="Vertex"><svg><use href="#gtri"/></svg></button><i class="sep"></i>
    <button class="b" aria-label="To front"><svg><use href="#go1"/></svg></button><button class="b" aria-label="To back"><svg><use href="#go2"/></svg></button><button class="b" aria-label="Forward"><svg><use href="#go3"/></svg></button><button class="b" aria-label="Backward"><svg><use href="#go4"/></svg></button><button class="b" aria-label="Group"><svg><use href="#ggrp"/></svg></button><button class="b" aria-label="Ungroup"><svg><use href="#gung"/></svg></button><button class="b" aria-label="Align"><svg><use href="#gal"/></svg></button><button class="less" aria-label="Align menu"></button><button class="b" aria-label="Text size"><svg><use href="#abox"/></svg></button><button class="more" aria-label="More"></button>
  </div>
  <div class="bar"><i class="grip"></i>
    <button class="b" aria-label="Snap select"><svg><use href="#sel1"/></svg></button><i class="sep"></i>
    <button class="b" aria-label="Select left"><svg><path stroke="#999" d="M.5 0v16"/><use href="#gs"/></svg></button><button class="b" aria-label="Select right"><svg><use href="#gs"/><path stroke="#999" d="M13.500 0v16"/></svg></button><button class="b" aria-label="Select top"><svg><path stroke="#999" d="M0 .5h16"/><use href="#gs"/></svg></button><button class="b" aria-label="Select bottom"><svg><path stroke="#999" d="M0 10.500h16"/><use href="#gs"/></svg></button><button class="b" aria-label="Select center"><svg><use href="#gs"/><path stroke="#999" d="M6.500 0v16"/></svg></button><button class="b" aria-label="Select middle"><svg><use href="#gs"/><path stroke="#999" d="M0 6.500h16"/></svg></button><button class="more" aria-label="More"></button>
  </div>
</div>
<div class="row coords">
  <div class="bar mono"><i class="grip"></i><span class="c1">(</span>
    <span class="spin off"><input aria-label="X1" disabled><span><button aria-label="Up"></button><button class="dn" aria-label="Down"></button></span></span><span class="c2">,</span>
    <span class="spin off"><input aria-label="Y1" disabled><span><button aria-label="Up"></button><button class="dn" aria-label="Down"></button></span></span><span class="c3">)-(</span>
    <span class="spin off"><input aria-label="X2" disabled><span><button aria-label="Up"></button><button class="dn" aria-label="Down"></button></span></span><span class="c2">,</span>
    <span class="spin off"><input aria-label="Y2" disabled><span><button aria-label="Up"></button><button class="dn" aria-label="Down"></button></span></span><span class="c2">)</span>
    <span class="spin off size"><input aria-label="Width" disabled><span><button aria-label="Up"></button><button class="dn" aria-label="Down"></button></span></span><span class="c2">x</span>
    <span class="spin off size"><input aria-label="Height" disabled><span><button aria-label="Up"></button><button class="dn" aria-label="Down"></button></span></span>
  </div>
</div>
<footer class="status"><p>Place the lamp with the reference device.</p><span>VT5-WX15</span><span class="wide">KEYENCE KV-X500/X300 (Ethernet)</span><span class="pos">----,----</span></footer>
</div>

<ul class="ctx"><li>Switch</li><li class="hot">Lamp</li><li>Lamp switch</li><li class="hr"></li><li class="no">Numerical display</li><li class="no">Text display</li><li class="hr"></li><li>Text component(A)</li><li class="hr"></li><li class="no">Text component + numerical display</li><li class="no">Text component + text display</li></ul>
<svg class="arrow" viewBox="0 0 356 72"><path fill="none" stroke="red" stroke-width="6" d="M355 3 12 62"/><path fill="red" d="m0 64 15-14 4 21z"/></svg>
</body>
</html>
```
FILE: styles.css
```css
* { box-sizing: border-box; }
html, body { height: 100%; }
body { margin: 0; background: #f0f0f0; color: #000; font: 12px/16px Roboto, "Noto Sans", sans-serif; display: flex; flex-direction: column; overflow: hidden; position: relative; }
.defs { display: none; }
button { font: inherit; color: inherit; padding: 0; border: 0; background: none; }
input, select { font: inherit; color: inherit; margin: 0; border-radius: 0; }
h1, h2, ul, p { margin: 0; padding: 0; font-weight: 400; list-style: none; }
.mono { font-family: "Noto Sans Mono CJK JP", "Liberation Mono", monospace; font-size: 12px; }

.title { height: 24px; background: #0078d7; color: #fff; display: flex; align-items: center; flex: none; }
.title h1 { font-size: 12px; flex: 1; }
.app { width: 16px; height: 16px; margin: 0 6px 0 1px; }
.title button { width: 46px; height: 24px; }
.title button svg { width: 10px; height: 10px; fill: none; stroke: #fff; display: block; margin: auto; }
.frame { flex: 1; min-height: 0; display: flex; flex-direction: column; border-right: 2px solid #4a4a4a; }

.menu { height: 25px; display: flex; align-items: center; gap: 18px; border-bottom: 1px solid #a0a0a0; flex: none; }
.menu .grip { margin-right: -6px; }
.menu a { color: #000; text-decoration: none; line-height: 20px; }
.row { display: flex; flex: none; height: 27px; }
.bar { display: flex; align-items: center; border: solid #a0a0a0; border-width: 0 1px 1px 0; box-shadow: inset 0 1px #fff; padding-right: 1px; }
.grip { width: 3px; height: 20px; border-right: 1px solid #a0a0a0; border-bottom: 1px solid #a0a0a0; border-left: 1px solid #fff; margin: 0 2px; flex: none; }
.sep { width: 2px; height: 22px; background: #a0a0a0; border-right: 1px solid #fff; margin: 0 2px; flex: none; }
.b { width: 22px; height: 22px; display: flex; align-items: center; justify-content: center; position: relative; flex: none; }
.b svg { width: 16px; height: 16px; display: block; color: #777; fill: none; }
.b.on { background: #f8f8f8; border: 1px solid; border-color: #a0a0a0 #fff #fff #a0a0a0; }
.b.up { border: 1px solid; border-color: #fff #a0a0a0 #a0a0a0 #fff; background: #f8f8f8; }
.more, .less { width: 11px; height: 22px; display: flex; align-items: flex-end; justify-content: center; flex: none; }
.more::after { content: ""; border: 3px solid transparent; border-top: 4px solid #000; margin-bottom: 1px; }
.less::after { content: ""; border: 3px solid transparent; border-bottom: 3px solid #777; margin-bottom: 11px; }
.num b { position: absolute; right: 1px; top: -1px; font: bold 10px/11px "Liberation Sans", sans-serif; color: #e03a3a; }
.all { flex-direction: column; justify-content: center; }
.all b { font: bold 8px/8px "Noto Sans", sans-serif; color: #333; }
.all svg { height: 8px; }
.tag b, .tag2 b, .n123 b { position: absolute; left: 0; right: 0; top: 9px; text-align: center; font: 700 7px/8px "Liberation Mono", monospace; color: #444; }
.tag2 b { top: 7px; font-size: 8px; }
.n123 b { top: 11px; color: #888; }
.sel { appearance: none; background: #e1e1e1 url("data:image/svg+xml,%3Csvg xmlns='http://www.w3.org/2000/svg' width='10' height='6'%3E%3Cpath d='m1 1 4 4 4-4' fill='none' stroke='%23444'/%3E%3C/svg%3E") no-repeat right 5px center; border: 1px solid #adadad; height: 22px; padding: 0 4px; opacity: 1; }
.sel.white { background-color: #fff; border-color: #888; height: 20px; }
.sel.dis { background-color: #ccc; border-color: #c0c0c0; color: #888; background-image: url("data:image/svg+xml,%3Csvg xmlns='http://www.w3.org/2000/svg' width='10' height='6'%3E%3Cpath d='m1 1 4 4 4-4' fill='none' stroke='%23999'/%3E%3C/svg%3E"); }
.pagesel { width: 140px; padding-left: 31px; }
.zoomsel { width: 60px; }
.idsel { width: 121px; height: 20px; }
.zoomsel, .idsel { padding-left: 3px; }
.spin { display: flex; background: #fff; border: 1px solid #7a7a7a; height: 20px; flex: none; }
.spin input { flex: 1; width: 0; min-width: 0; border: 0; padding: 0 3px; background: none; outline: 0; }
.spin > span { display: flex; flex-direction: column; gap: 1px; width: 14px; padding: 1px; flex: none; }
.spin button { flex: 1; border: 1px solid #adadad; background: #f0f0f0; display: flex; align-items: center; justify-content: center; }
.spin button::after { content: ""; border: 3px solid transparent; border-bottom-color: currentColor; border-top: 0; }
.spin .dn::after { border: 3px solid transparent; border-top-color: currentColor; border-bottom: 0; }
.idspin { width: 56px; }

.main { flex: 1; min-height: 0; display: flex; }
.left { width: 239px; display: flex; flex-direction: column; flex: none; margin-right: 4px; }
.head { height: 19px; margin-top: 1px; background: #bfcddb; display: flex; align-items: center; font-size: 12px; line-height: 19px; padding: 0 2px 0 3px; flex: none; white-space: nowrap; }
.head button { width: 15px; height: 15px; border: 1px solid; border-color: #fff #777 #777 #fff; background: #f0f0f0; }
.head button:first-of-type { margin-left: auto; }
.head svg { width: 9px; height: 9px; display: block; margin: auto; fill: none; stroke: #000; }
.tree { flex: 1; min-height: 0; background: #fff; border: 1px solid #828790; border-left: 0; margin: 2px 0 0; padding: 1px; font: 11px/16px "Liberation Sans", sans-serif; }
.tree li { height: 16px; display: flex; align-items: center; }
.tree svg { width: 16px; height: 15px; margin-right: 5px; flex: none; }
.d0 { padding-left: 7px; } .d1 { padding-left: 26px; } .d2 { padding-left: 45px; } .d3 { padding-left: 64px; }
.cur { background: #f0f0f0; font-weight: 700; }
.ex { width: 9px; height: 9px; margin-right: 6px; border: 1px solid #919191; border-radius: 1px; background: linear-gradient(#36589c, #36589c) center/5px 1px no-repeat, linear-gradient(#36589c, #36589c) center/1px 5px no-repeat, #fff; flex: none; }
.ex.m { background: linear-gradient(#36589c, #36589c) center/5px 1px no-repeat, #fff; }
.ex.none { visibility: hidden; }
.treebar { height: 25px; display: flex; align-items: center; padding-left: 1px; flex: none; }
.tabs { height: 22px; display: flex; align-items: flex-start; border-top: 2px solid #777; padding-left: 2px; flex: none; white-space: nowrap; }
.tab { height: 19px; display: flex; align-items: center; gap: 3px; padding: 0 1px 0 3px; border-bottom: 2px solid #777; border-left: 1px solid #fff; }
.tab svg { width: 16px; height: 16px; flex: none; }
.tab.act { height: 21px; margin: -1px 0 0 2px; background: #f0f0f0; padding: 0 7px 0 3px; border-right: 2px solid #777; border-radius: 0 0 3px 0; }
.tagged .b { width: 16px; height: 16px; }
.tagged b { top: 6px; }

.work { flex: 1; min-width: 0; display: grid; grid-template: minmax(0, 1fr) 18px / minmax(0, 1fr) 19px; border: 1px solid #777; border-width: 0 1px 0 2px; border-right-color: #ddd; margin-right: 4px; }
.canvas { position: relative; overflow: hidden; background: repeating-conic-gradient(#1f3566 0 25%, #3b4c72 0 50%) 0 0/4px 4px; }
.panelscr { position: absolute; left: 67px; top: 33px; width: 1024px; height: 768px; background: #000; }
.stripe { position: absolute; left: 67px; top: 801px; width: 1024px; bottom: 0; background: linear-gradient(135deg, #97989b 25%, #abacaf 25% 50%, #97989b 50% 75%, #abacaf 75%) 0 0/8px 8px; }
.cross { position: absolute; left: 495px; top: 367px; width: 34px; height: 34px; stroke: #fff; stroke-width: 2; }
.slide { position: absolute; left: -32px; bottom: 0; display: flex; }
.slide svg { width: 32px; height: 32px; }
.slide span { width: 92px; height: 32px; border-radius: 9px 9px 0 0; background: #d3dcd3; font-weight: 700; line-height: 30px; text-align: center; }
.vs { display: flex; flex-direction: column; align-items: center; background: #f0f0f0; padding: 2px 0 0; }
.vs svg, .hs svg { width: 9px; height: 9px; fill: none; stroke: #555; stroke-width: 2; flex: none; margin: 3px; }
.vs .track { flex: 1; width: 16px; }
.vs i { display: block; width: 100%; background: #cdcdcd; margin-top: 241px; height: 332px; }
.hs { grid-column: 1 / 3; display: flex; align-items: center; background: #f0f0f0; border-top: 1px solid #fff; padding-right: 19px; }
.hs .track { flex: 1; height: 15px; display: grid; grid-template-columns: 266fr 741fr 209fr; }
.hs i { background: #cdcdcd; grid-column: 2; }

.right { width: 350px; display: flex; flex-direction: column; flex: none; font: 11px "Liberation Sans", sans-serif; }
.right .head { background: #99b4d1; font: 12px/19px Roboto, "Noto Sans", sans-serif; padding-left: 4px; }
.rbox { flex: 1; min-height: 0; margin-top: 2px; border: solid; border-width: 2px 1px 1px 2px; border-color: #777 #ddd #ddd #777; display: flex; flex-direction: column; padding: 0 4px 6px 5px; }
.plc { display: flex; align-items: flex-start; padding: 12px 0 0 4px; height: 46px; flex: none; }
.plc label { width: 26px; line-height: 19px; }
.plc .sel { width: 39px; margin-right: 7px; }
.plcspin { width: 41px; height: 25px; margin-right: 8px; }
.plcspin input { height: 20px; }
.plcspin > span { width: 18px; padding: 2px; }
.push { border: 1px solid #adadad; background: #e1e1e1; height: 23px; padding: 0 4px; margin-top: 1px; }
.ptabs { display: flex; align-items: flex-end; height: 22px; flex: none; }
.ptabs button { border: 1px solid #d9d9d9; border-bottom: 0; height: 19px; width: 48px; }
.ptabs .act { background: #fff; height: 21px; width: 94px; }
.page { flex: 1; min-height: 0; background: #fff; border: 1px solid #d9d9d9; padding: 1px 1px 3px; display: flex; }
.inner { flex: 1; min-width: 0; background: #f0f0f0; border: solid; border-width: 2px 1px 1px 2px; border-color: #777 #ddd #ddd #777; display: flex; flex-direction: column; padding: 12px 6px 13px; }
.unit { display: flex; padding-left: 3px; height: 23px; flex: none; }
.unit label { width: 41px; line-height: 19px; }
.unit .sel { width: 144px; height: 23px; }
fieldset { border: 1px solid #dcdcdc; margin: 0; padding: 0; min-width: 0; position: relative; }
legend { padding: 0 2px; margin-left: 6px; line-height: 13px; }
.dev { width: 192px; height: 45px; display: flex; margin-top: 4px; flex: none; }
.dev label, .only { display: flex; align-items: center; gap: 3px; }
.dev label { height: 20px; margin: 5px 0 0 8px; }
.dev .word { margin-left: 27px; }
input[type=radio], input[type=checkbox] { appearance: none; width: 13px; height: 13px; border: 1px solid #333; background: #fff; flex: none; }
input[type=radio] { border-radius: 50%; }
input[type=radio]:checked { background: radial-gradient(circle, #222 0 3px, #fff 4px); }
input[type=checkbox]:checked { background: #fff url("data:image/svg+xml,%3Csvg xmlns='http://www.w3.org/2000/svg' width='11' height='11'%3E%3Cpath d='m2 5 3 3 5-6' fill='none' stroke='%23222'/%3E%3C/svg%3E"); }
.dev .sel { width: 56px; height: 23px; margin: 3px 10px 0 auto; }
.serif { font-family: "Liberation Serif", serif; font-size: 12px; }
.filter { display: flex; align-items: center; height: 21px; margin-top: 5px; padding-left: 2px; flex: none; }
.filter label { width: 67px; }
.filter input { width: 123px; height: 21px; border: 1px solid #7a7a7a; }
.only { height: 14px; margin: 8px 0 0 9px; flex: none; }
.gridwrap { flex: 1; min-height: 0; margin-top: 9px; display: flex; border: solid; border-width: 2px 1px 1px 2px; border-color: #777 #ddd #ddd #777; position: relative; width: 319px; }
.clip { flex: 1; min-width: 0; overflow: hidden; background: #fff; }
table { border-collapse: separate; border-spacing: 0; width: 100%; table-layout: fixed; }
th, td { height: 17px; padding: 0 3px; text-align: left; font-weight: 400; line-height: 15px; border: solid #e8e8e8; border-width: 0 1px 1px 0; white-space: nowrap; overflow: hidden; }
th { background: #f0f0f0; border-color: #a0a0a0; }
th:first-child { width: 67px; }
.s td { background: #0078d7; color: #fff; border-color: #fff; }
.s .foc { outline: 1px dotted #f0a050; outline-offset: -1px; }
.gridwrap .vs { width: 18px; padding: 1px 0; }
.gridwrap i { margin: 0; height: 40px; }
.redbox { position: absolute; left: -6px; top: 11px; width: 302px; height: 282px; border: 4px solid #f00; }
.drop { width: 230px; height: 52px; display: flex; margin-top: 10px; flex: none; }
.drop label { width: 65px; margin: 15px 0 0 5px; }
.drop .sel { width: 155px; margin-top: 11px; }
.file { display: flex; justify-content: space-between; margin-top: 4px; flex: none; width: 336px; }
.file output { width: 279px; height: 21px; line-height: 19px; border: 1px solid; border-color: #a0a0a0 #fff #fff #a0a0a0; }
.file .push { width: 54px; height: 22px; margin: 0; }
.right .tabs { font: 12px/16px Roboto, "Noto Sans", sans-serif; padding-left: 4px; margin-top: 1px; }

.col { width: 26px; flex: none; }
.col + .col { width: 25px; }
.vbar { border: solid #a0a0a0; border-width: 0 1px 1px 0; box-shadow: inset 1px 1px #fff; display: flex; flex-direction: column; align-items: center; padding-bottom: 1px; }
.vbar .grip { width: 20px; height: 3px; margin: 2px 0 4px; border: solid #a0a0a0; border-width: 0 1px 1px 0; }
.vbar .sep { width: 21px; height: 2px; margin: 2px 0; border: 0; border-bottom: 1px solid #fff; }
.vmore { width: 22px; height: 11px; display: flex; align-items: center; justify-content: flex-end; }
.vmore::after { content: ""; border: 4px solid transparent; border-left-color: #000; border-right: 0; margin-right: 4px; }
.bigA { font: bold 19px/22px "Liberation Sans", sans-serif; color: #505050; }
.dxf { font: 10px Roboto, sans-serif; color: #444; }
.green svg { color: #90ee30; } .red svg { color: #f33; }

.low { height: 26px; margin-top: 1px; border-top: 1px solid #fff; }
.coords { height: 30px; }
.coords .bar { padding-right: 17px; }
.coords span.spin { width: 51px; height: 21px; }
.coords span.size { width: 48px; }
.spin.off { background: #f0f0f0; border: 1px solid #ccc; color: #777; }
.spin.off > span { width: 17px; }
.spin.off button { border-color: #ddd; }
.c1 { width: 12px; } .c2 { width: 17px; text-align: center; } .c3 { width: 30px; text-align: center; }
.status { height: 21px; display: flex; align-items: center; gap: 3px; padding-left: 2px; flex: none; white-space: nowrap; }
.status p { flex: 1; }
.status span { border: 1px solid; border-color: #a0a0a0 #fff #fff #a0a0a0; height: 18px; line-height: 16px; padding: 0 2px; width: 61px; }
.status .wide { width: 187px; }
.status .pos { width: 50px; }

.ctx { position: absolute; left: 1004px; top: 422px; width: 281px; padding: 2px; background: #f2f2f2; border: 1px solid #ccc; }
.ctx li { height: 22px; line-height: 22px; padding-left: 32px; }
.ctx .hot { background: #91c9f7; }
.ctx .no { color: #6d6d6d; }
.ctx .hr { height: 1px; padding: 0; margin: 3px 0 3px 28px; background: #d0d0d0; }
.arrow { position: absolute; left: 1169px; top: 367px; width: 356px; height: 72px; overflow: visible; }
```
